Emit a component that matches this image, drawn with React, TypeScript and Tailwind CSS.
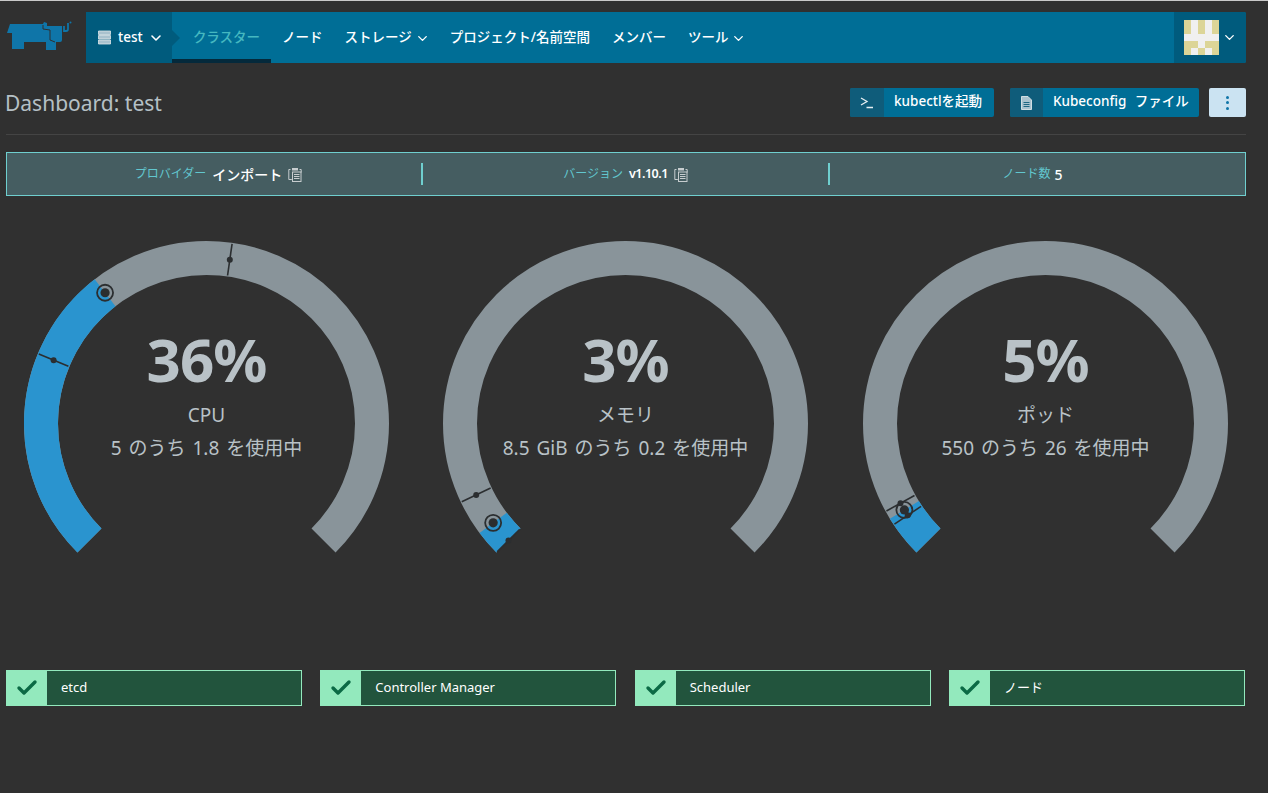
import { Check, ChevronDown } from "lucide-react";

const FONT = '"Noto Sans", "Noto Sans CJK JP", sans-serif';

const navItems = [
  { label: "ノード" },
  { label: "ストレージ", caret: true },
  { label: "プロジェクト/名前空間" },
  { label: "メンバー" },
  { label: "ツール", caret: true },
];

const avatar = [
  [1, 0, 1, 0, 1],
  [1, 0, 1, 0, 1],
  [0, 0, 0, 0, 0],
  [1, 1, 0, 1, 1],
  [1, 0, 1, 0, 1],
];

const R = 165.5;
const CX = 182.5;
const CY = 182.5;

function polar(pct: number, r: number) {
  const a = ((-135 + pct * 2.7) * Math.PI) / 180;
  return { x: CX + r * Math.sin(a), y: CY - r * Math.cos(a) };
}

function arc(from: number, to: number) {
  const a = polar(from, R);
  const b = polar(to, R);
  const large = (to - from) * 2.7 > 180 ? 1 : 0;
  return `M${a.x} ${a.y}A${R} ${R} 0 ${large} 1 ${b.x} ${b.y}`;
}

function Gauge(props: { pct: number; ticks: number[]; title: string; sub: string }) {
  const dot = polar(props.pct, R);
  return (
    <div className="relative h-[330px] w-[365px] shrink-0">
      <svg width="365" height="330" viewBox="0 0 365 330">
        <path d={arc(0, 100)} fill="none" stroke="#89949a" strokeWidth="34" />
        <path d={arc(0, props.pct)} fill="none" stroke="#2a94cf" strokeWidth="34" />
        {props.ticks.map((t) => {
          const a = polar(t, R - 16);
          const b = polar(t, R + 16);
          const m = polar(t, R);
          return (
            <g key={t}>
              <line x1={a.x} y1={a.y} x2={b.x} y2={b.y} stroke="#2b2e30" strokeWidth="1.6" />
              <circle cx={m.x} cy={m.y} r="3" fill="#2b2e30" />
            </g>
          );
        })}
        <circle cx={dot.x} cy={dot.y} r="8" fill="none" stroke="#2b2e30" strokeWidth="1.8" />
        <circle cx={dot.x} cy={dot.y} r="4.6" fill="#2b2e30" />
      </svg>
      <div className="absolute inset-x-0 top-[82px] flex flex-col items-center text-[#b9c2c7]">
        <div className="text-[60px] leading-[72px] font-bold tracking-[-1px]">{props.pct}%</div>
        <div className="mt-[8px] text-[19px] leading-[24px]">{props.title}</div>
        <div className="mt-[9px] text-[19px] leading-[24px] [word-spacing:2px]">{props.sub}</div>
      </div>
    </div>
  );
}

function ClipboardIcon() {
  return (
    <svg width="14" height="15" viewBox="0 0 14 15" className="ml-[6px] mt-[1px]">
      <path d="M2.5 2.5H.8v10h3M11.5 2.5h1.700v3" fill="none" stroke="#c7cdcf" strokeWidth="1" />
      <rect x="4" y="1" width="6" height="2.500" fill="#c7cdcf" />
      <rect x="4.500" y="5" width="8.500" height="9.500" fill="none" stroke="#c7cdcf" strokeWidth="1" />
      <path d="M6 7.500h5.500M6 9.500h5.500M6 11.500h5.500" stroke="#c7cdcf" strokeWidth="1" />
    </svg>
  );
}

function Status({ label }: { label: string }) {
  return (
    <div className="flex h-[36px] border border-[#93e9bd] bg-[#22543d]">
      <div className="flex w-[40px] items-center justify-center bg-[#93e9bd]">
        <Check size={24} strokeWidth={3.4} color="#0b6a45" />
      </div>
      <div className="pl-[14px] text-[13px] leading-[33px] text-white">{label}</div>
    </div>
  );
}

export default function App() {
  return (
    <div className="h-[793px] w-full overflow-hidden border-t border-[#c9c9c9] bg-[#303030]" style={{ fontFamily: FONT }}>
      <header className="mt-[11px] flex h-[51px] pr-[22px]">
        <div className="w-[86px] shrink-0 pl-[6px] pt-[8px]">
          <svg width="68" height="32" viewBox="0 0 68 32">
            <path
              d="M4 4H37L38 2L41 3V6H56V20Q56 22 54 22H50V30H40V22H18V29H6V13H1Z"
              fill="#0f75a8"
            />
            <path d="M37 5V9L44 10V20L49 22" fill="none" stroke="#303030" strokeWidth="1" />
            <path d="M58 6V11H60Q62 11 62 9V3" fill="none" stroke="#0f75a8" strokeWidth="1.800" />
            <circle cx="64.500" cy="2.500" r="1" fill="#0f75a8" />
          </svg>
        </div>
        <nav className="flex flex-1 rounded-[2px] bg-[#006e96] text-[13.500px] font-medium text-white">
          <div className="relative flex w-[86px] items-center bg-[#005b7d] pl-[12px]">
            <svg width="13" height="15" viewBox="0 0 13 15">
              <path d="M.500 1h12v3.500H.500zM.500 5.500h12V9H.500zM.500 10h12v4H.500z" fill="#a9c2ce" stroke="#dfe7ea" strokeWidth=".8" />
            </svg>
            <span className="ml-[7px]">test</span>
            <ChevronDown size={16} strokeWidth={2.4} className="ml-[5px]" />
            <div className="absolute right-[-8px] top-[18px] h-0 w-0 border-y-[8px] border-l-[8px] border-y-transparent border-l-[#005b7d]" />
          </div>
          <div className="flex w-[99px] items-center justify-center border-b-4 border-[#04293b] pl-[10px] pt-[4px] text-[#45b8c0]">
            クラスター
          </div>
          {navItems.map((n) => (
            <div key={n.label} className={n.caret ? "flex items-center whitespace-nowrap pl-[11px] pr-[9px]" : "flex items-center whitespace-nowrap pl-[11px] pr-[11px]"}>
              {n.label}
              {n.caret && <ChevronDown size={15} strokeWidth={2.2} className="ml-[3px] mt-[2px]" />}
            </div>
          ))}
          <div className="ml-auto flex w-[72px] items-center rounded-r-[2px] bg-[#005b7d] pl-[10px]">
            <div className="grid h-[35px] w-[35px] grid-cols-5">
              {avatar.flat().map((v, i) => (
                <div key={i} className={v ? "bg-[#dcd597]" : "bg-[#f0f0f0]"} />
              ))}
            </div>
            <ChevronDown size={15} strokeWidth={2.2} className="ml-[3px]" />
          </div>
        </nav>
      </header>

      <div className="ml-[6px] mr-[22px] mt-[25px] flex h-[47px] items-start justify-between border-b border-[#444444]">
        <h1 className="-ml-px text-[21px] leading-[30px] text-[#b5c0c6]">Dashboard: test</h1>
        <div className="flex text-[13.500px] font-medium text-white">
          <div className="flex h-[29px] w-[144px] rounded-[2px] bg-[#006e96]">
            <div className="flex w-[34px] items-center justify-center rounded-l-[2px] bg-[#0f5c7a]">
              <svg width="14" height="12" viewBox="0 0 14 12">
                <path d="M1 1l6 3.500L1 8M6.500 10.500H13" fill="none" stroke="#e6eef2" strokeWidth="1.300" />
              </svg>
            </div>
            <span className="pl-[10px] leading-[27px]">kubectlを起動</span>
          </div>
          <div className="ml-[16px] flex h-[29px] w-[189px] rounded-[2px] bg-[#006e96]">
            <div className="flex w-[33px] items-center justify-center rounded-l-[2px] bg-[#0f5c7a]">
              <svg width="11" height="14" viewBox="0 0 11 14">
                <path d="M.500.500h6.500l3.500 3.500v9.500H.500z" fill="#a9c2ce" stroke="#dfe7ea" strokeWidth=".9" />
                <path d="M2.500 6.500h6M2.500 8.500h6M2.500 10.500h6" stroke="#0f5c7a" strokeWidth=".9" />
              </svg>
            </div>
            <span className="pl-[10px] leading-[27px] [word-spacing:5px]">Kubeconfig ファイル</span>
          </div>
          <div className="ml-[10px] flex h-[29px] w-[37px] flex-col items-center justify-center gap-[2.500px] rounded-[2px] bg-[#cbe3f2]">
            <span className="h-[3px] w-[3px] rounded-full bg-[#0f75a8]" />
            <span className="h-[3px] w-[3px] rounded-full bg-[#0f75a8]" />
            <span className="h-[3px] w-[3px] rounded-full bg-[#0f75a8]" />
          </div>
        </div>
      </div>

      <div className="ml-[6px] mr-[22px] mt-[17px] flex h-[44px] items-center border border-[#6fcfcf] bg-[#455d61] text-[12px]">
        <div className="flex w-[414px] items-center justify-center pl-[9px] text-[#62c7cf]">
          プロバイダー
          <span className="ml-[6px] text-[14px] font-medium text-white">インポート</span>
          <ClipboardIcon />
        </div>
        <div className="h-[22px] w-[2px] bg-[#6fcfcf]" />
        <div className="flex w-[405px] items-center justify-center text-[#62c7cf]">
          バージョン
          <span className="ml-[6px] text-[12.500px] font-semibold tracking-[-.5px] text-white">v1.10.1</span>
          <ClipboardIcon />
        </div>
        <div className="h-[22px] w-[2px] bg-[#6fcfcf]" />
        <div className="flex flex-1 items-center justify-center pr-[10px] text-[#62c7cf]">
          ノード数
          <span className="ml-[4px] text-[14px] font-medium text-white">5</span>
        </div>
      </div>

      <div className="mt-[45px] flex gap-[54px] pl-[24px]">
        <Gauge pct={36} ticks={[25, 53]} title="CPU" sub="5 のうち 1.8 を使用中" />
        <Gauge pct={3} ticks={[0, 7.2]} title="メモリ" sub="8.5 GiB のうち 0.2 を使用中" />
        <div className="ml-px">
          <Gauge pct={5} ticks={[4.2, 6]} title="ポッド" sub="550 のうち 26 を使用中" />
        </div>
      </div>

      <div className="ml-[6px] mr-[23px] mt-[99px] grid grid-cols-4 gap-[18.300px]">
        <Status label="etcd" />
        <Status label="Controller Manager" />
        <Status label="Scheduler" />
        <Status label="ノード" />
      </div>
    </div>
  );
}
